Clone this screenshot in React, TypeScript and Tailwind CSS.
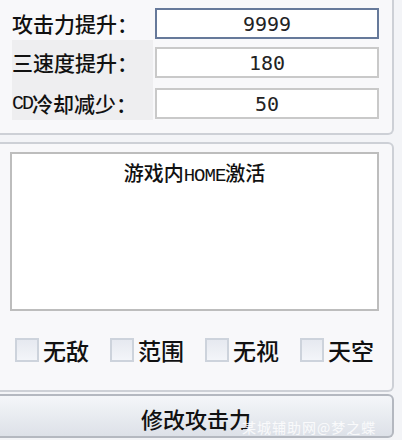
import React from 'react';

type RowProps = {
    label: React.ReactNode;
    value: string;
    rowClass: string;
    padClass: string;
    shaded?: boolean;
    active?: boolean;
};

const StatRow = ({ label, value, rowClass, padClass, shaded, active }: RowProps) => (
    <div className={`flex ${rowClass}`}>
        <div className={`w-[141px] ${padClass} ${shaded ? 'bg-[#eeeef0]' : ''}`}>
            <div className="h-[31px] flex items-center text-[21px] text-[#111] leading-none">{label}</div>
        </div>
        <div className={`ml-[2px] ${padClass}`}>
            <div
                className={`w-[224px] h-[31px] bg-white flex items-center justify-center text-[20px] text-[#222] [font-family:DejaVu_Sans_Mono,monospace] border-2 ${
                    active ? 'border-[#66799a]' : 'border-[#c9c9c9]'
                }`}
            >
                {value}
            </div>
        </div>
    </div>
);

const Check = ({ text }: { text: string }) => (
    <label className="flex items-center gap-[4px]">
        <span className="w-[24px] h-[24px] border-2 border-[#cdd3dc] bg-gradient-to-b from-[#e6e9f0] to-[#f3f5f9]" />
        <span className="text-[23px] leading-none text-[#111]">{text}</span>
    </label>
);

export default function App() {
    return (
        <div className="relative w-[402px] h-[440px] overflow-hidden bg-[#f3f4f7] font-medium [font-family:Noto_Sans_CJK_SC,sans-serif]">
            {/* stat boosts */}
            <div className="w-[394px] h-[135px] bg-[#f8f8fa] border-r-2 border-b-2 border-[#cdd0d6] rounded-br-[6px] pl-[12px]">
                <StatRow label="攻击力提升：" value="9999" rowClass="h-[40px]" padClass="pt-[8px]" active />
                <StatRow label="三速度提升：" value="180" rowClass="h-[42px]" padClass="pt-[7px]" shaded />
                <StatRow
                    label={
                        <>
                            <span className="[font-family:Liberation_Mono,monospace] text-[20px] tracking-[-2px]">CD</span>
                            冷却减少：
                        </>
                    }
                    value="50"
                    rowClass="h-[38px]"
                    padClass="pt-[6px]"
                    shaded
                />
            </div>

            {/* notes + toggles */}
            <div className="mt-[7px] w-[394px] h-[250px] bg-[#f8f8fa] border-t-2 border-r-2 border-b-2 border-[#cdd0d6] rounded-r-[6px] pl-[10px] pt-[8px]">
                <div className="w-[369px] h-[159px] bg-white border-2 border-[#bdbdbd] pt-[9px] text-center text-[20px] leading-none text-[#111]">
                    游戏内<span className="[font-family:Liberation_Mono,monospace] text-[19px] tracking-[-1px]">HOME</span>激活
                </div>
                <div className="mt-[27px] pl-[5px] flex gap-[21px]">
                    <Check text="无敌" />
                    <Check text="范围" />
                    <Check text="无视" />
                    <Check text="天空" />
                </div>
            </div>

            <button className="mt-[2px] w-[394px] h-[44px] border-2 border-l-0 border-[#b4b8c0] rounded-r-[6px] bg-gradient-to-b from-[#f4f6f9] to-[#dde1e8] flex items-center justify-center pt-[4px] text-[22px] text-[#111] leading-none">
                修改攻击力
            </button>

            <span className="absolute left-[242px] top-[420px] text-[14px] leading-none tracking-[1px] font-normal text-white/80">
                某城辅助网@梦之蝶
            </span>
        </div>
    );
}
